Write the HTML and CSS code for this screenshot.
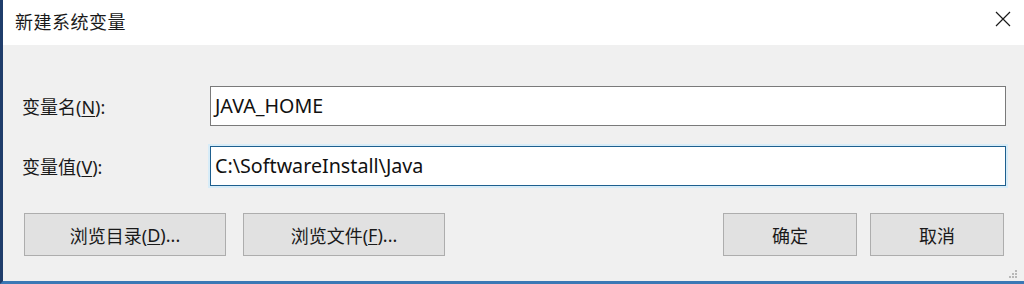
FILE: index.html
```html
<!DOCTYPE html>
<html lang="zh">
<head>
<meta charset="utf-8">
<title>新建系统变量</title>
<link rel="stylesheet" href="styles.css">
</head>
<body>
<div class="window">
  <div class="titlebar">
    <span class="title">新建系统变量</span>
    <span class="close">
      <svg width="16" height="16" viewBox="0 0 16 16"><path d="M1 1 L15 15 M15 1 L1 15" stroke="#1a1a1a" stroke-width="1.2" fill="none"/></svg>
    </span>
  </div>
  <div class="body">
    <div class="form">
      <label class="label">变量名(<u>N</u>):</label>
      <div class="input">JAVA_HOME</div>
      <label class="label">变量值(<u>V</u>):</label>
      <div class="input focus">C:\SoftwareInstall\Java</div>
    </div>
    <div class="buttons">
      <div class="group left">
        <div class="btn wide">浏览目录(<u>D</u>)...</div>
        <div class="btn wide">浏览文件(<u>F</u>)...</div>
      </div>
      <div class="group right">
        <div class="btn">确定</div>
        <div class="btn">取消</div>
      </div>
    </div>
    <div class="grip">
      <svg width="10" height="10" viewBox="0 0 10 10" fill="#b8b8b8"><rect x="7" y="1" width="2" height="2"/><rect x="4" y="4" width="2" height="2"/><rect x="7" y="4" width="2" height="2"/><rect x="1" y="7" width="2" height="2"/><rect x="4" y="7" width="2" height="2"/><rect x="7" y="7" width="2" height="2"/></svg>
    </div>
  </div>
</div>
</body>
</html>
```

FILE: styles.css
```css
html, body {
  margin: 0;
  padding: 0;
  background: #f0f0f0;
}
body {
  font-family: "Noto Sans", "Noto Sans CJK SC", sans-serif;
  color: #1a1a1a;
}
.window {
  width: 1024px;
  height: 284px;
  box-sizing: border-box;
  border-left: 3px solid #1f3d6b;
  border-bottom: 3px solid #3a78b5;
  display: flex;
  flex-direction: column;
  background: #f0f0f0;
}
.titlebar {
  height: 45px;
  flex: none;
  background: #ffffff;
  display: flex;
  align-items: center;
  justify-content: space-between;
  padding: 0 13px 0 12px;
  box-sizing: border-box;
}
.title {
  font-size: 18px;
  letter-spacing: 0.5px;
  margin-top: -3px;
}
.close {
  display: flex;
  margin-top: -8px;
}
.body {
  flex: 1;
  position: relative;
  padding: 41px 18px 0 19px;
  box-sizing: border-box;
}
.form {
  display: grid;
  grid-template-columns: 188px 1fr;
  row-gap: 20px;
  align-items: center;
}
.label {
  font-size: 18px;
  padding-left: 0;
}
.label u, .btn u {
  text-underline-offset: 2px;
  text-decoration-thickness: 1px;
}
.input {
  height: 40px;
  box-sizing: border-box;
  background: #ffffff;
  border: 1px solid #7a7a7a;
  font-size: 19.7px;
  line-height: 37px;
  padding-left: 4px;
  color: #111;
}
.input.focus {
  border-color: #1e5f8e;
  box-shadow: 0 0 0 2px #d7ecf8;
}
.buttons {
  display: flex;
  justify-content: space-between;
  margin-top: 27px;
  padding: 0 2px 0 2px;
}
.group {
  display: flex;
}
.group.left {
  gap: 17px;
}
.group.right {
  gap: 13px;
}
.btn {
  width: 134px;
  height: 43px;
  box-sizing: border-box;
  background: #e1e1e1;
  border: 1px solid #adadad;
  display: flex;
  align-items: center;
  justify-content: center;
  font-size: 18px;
  color: #1a1a1a;
}
.btn.wide {
  width: 202px;
}
.grip {
  position: absolute;
  right: 6px;
  bottom: 2px;
  display: flex;
}
```
